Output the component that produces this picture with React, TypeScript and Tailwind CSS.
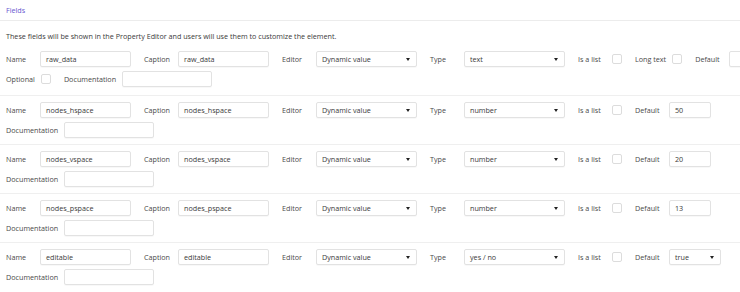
import React from "react";

type Row = {
  name: string;
  type: string;
  longText?: boolean;
  optional?: boolean;
  def: { kind: "input" | "select"; value: string };
};

const rows: Row[] = [
  { name: "raw_data", type: "text", longText: true, optional: true, def: { kind: "input", value: "" } },
  { name: "nodes_hspace", type: "number", def: { kind: "input", value: "50" } },
  { name: "nodes_vspace", type: "number", def: { kind: "input", value: "20" } },
  { name: "nodes_pspace", type: "number", def: { kind: "input", value: "13" } },
  { name: "editable", type: "yes / no", def: { kind: "select", value: "true" } },
];

function Label({ children }: { children: React.ReactNode }) {
  return <span className="min-w-[28px] mr-[6px] text-[#4a4a4a] whitespace-nowrap">{children}</span>;
}

function Input({ value, w }: { value: string; w: string }) {
  return (
    <div className={`${w} h-[16px] border border-[#e2e2e2] rounded-[2px] bg-white flex items-center pl-[5px] text-[#3a3a3a] shadow-[0_1px_1px_rgba(0,0,0,0.03)]`}>
      {value}
    </div>
  );
}

function Select({ value, w }: { value: string; w: string }) {
  return (
    <div className={`${w} h-[16px] border border-[#e2e2e2] rounded-[2px] bg-white flex items-center justify-between pl-[5px] pr-[6px] text-[#3a3a3a] shadow-[0_1px_1px_rgba(0,0,0,0.03)]`}>
      <span>{value}</span>
      <span className="w-0 h-0 border-l-[2.5px] border-r-[2.5px] border-t-[3px] border-l-transparent border-r-transparent border-t-[#222]" />
    </div>
  );
}

function Check() {
  return <div className="w-[10px] h-[10px] border border-[#dcdcdc] rounded-[2px] bg-white" />;
}

function Group({ children }: { children: React.ReactNode }) {
  return <div className="flex items-center">{children}</div>;
}

export default function App() {
  return (
    <div
      className="w-[740px] h-[292px] overflow-hidden bg-white text-[7.2px] leading-[10px]"
      style={{ fontFamily: '"Open Sans", "Noto Sans", sans-serif' }}
    >
      <div className="h-[21px] px-[6px] flex items-center text-[#6656d0] border-b border-[#ececec]">Fields</div>
      <div className="w-[800px]">
        <div className="px-[6px] pt-[10px] pb-[4px] text-[#3a3a3a]">
          These fields will be shown in the Property Editor and users will use them to customize the element.
        </div>
        {rows.map((r, i) => (
          <div
            key={r.name}
            className={`px-[6px] pt-[6px] ${i === 0 ? "pb-[8px]" : "pb-[6px]"} ${i < rows.length - 1 ? "border-b border-[#efefef]" : ""} flex flex-wrap items-center gap-x-[13px] gap-y-[4px]`}
          >
            <Group>
              <Label>Name</Label>
              <Input value={r.name} w="w-[91px]" />
            </Group>
            <Group>
              <Label>Caption</Label>
              <Input value={r.name} w="w-[91px]" />
            </Group>
            <Group>
              <Label>Editor</Label>
              <Select value="Dynamic value" w="w-[101px]" />
            </Group>
            <Group>
              <Label>Type</Label>
              <Select value={r.type} w="w-[101px]" />
            </Group>
            <Group>
              <Label>Is a list</Label>
              <Check />
            </Group>
            {r.longText && (
              <Group>
                <Label>Long text</Label>
                <Check />
              </Group>
            )}
            <Group>
              <Label>Default</Label>
              {r.def.kind === "input" ? (
                <Input value={r.def.value} w="w-[42px]" />
              ) : (
                <Select value={r.def.value} w="w-[52px]" />
              )}
            </Group>
            {r.optional && (
              <Group>
                <Label>Optional</Label>
                <Check />
              </Group>
            )}
            <Group>
              <Label>Documentation</Label>
              <Input value="" w="w-[90px]" />
            </Group>
          </div>
        ))}
      </div>
    </div>
  );
}
